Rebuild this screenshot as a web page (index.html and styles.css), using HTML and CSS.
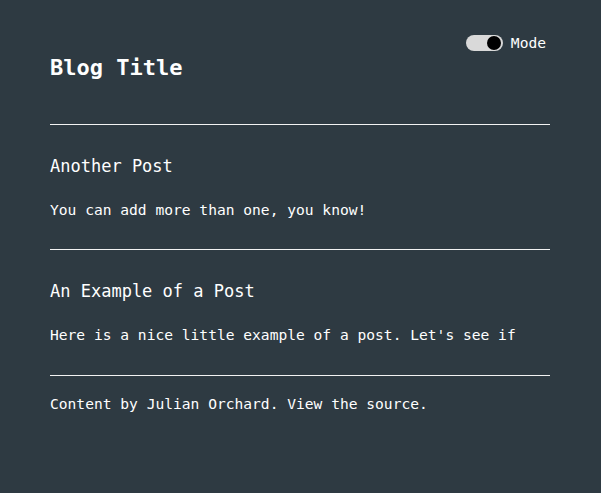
FILE: index.html
```html
<!DOCTYPE html>
<html lang="en">
<head>
<meta charset="utf-8">
<title>Blog Title</title>
<link rel="stylesheet" href="styles.css">
</head>
<body>
<div class="page">
  <header class="header">
    <div class="mode-row">
      <span class="toggle"><span class="knob"></span></span>
      <span class="mode-label">Mode</span>
    </div>
    <h1 class="title">Blog Title</h1>
  </header>
  <hr class="rule rule-first">
  <article class="post">
    <h2 class="post-title">Another Post</h2>
    <p class="post-body">You can add more than one, you know!</p>
  </article>
  <hr class="rule">
  <article class="post post-last">
    <h2 class="post-title">An Example of a Post</h2>
    <p class="post-body">Here is a nice little example of a post. Let's see if</p>
  </article>
  <hr class="rule">
  <footer class="footer">Content by Julian Orchard. View the source.</footer>
</div>
</body>
</html>
```

FILE: styles.css
```css
html, body {
  margin: 0;
  padding: 0;
  background: #2e3a42;
}
body {
  color: #ffffff;
  font-family: "DejaVu Sans Mono", "Liberation Mono", monospace;
  font-size: 14.6px;
  line-height: 20px;
}
.page {
  margin: 0 51px 0 50px;
  padding-top: 33px;
}
.header {
  display: flex;
  flex-direction: column;
}
.mode-row {
  display: flex;
  justify-content: flex-end;
  align-items: center;
  gap: 8px;
  height: 20px;
  padding-right: 4px;
}
.toggle {
  display: flex;
  align-items: center;
  justify-content: flex-end;
  width: 37px;
  height: 16px;
  border-radius: 8px;
  background: #d9d9d9;
  padding: 0 1.5px;
  box-sizing: border-box;
}
.knob {
  width: 14px;
  height: 14px;
  border-radius: 50%;
  background: #000000;
}
.mode-label {
  font-size: 14.6px;
}
.title {
  margin: 0;
  font-size: 22px;
  line-height: 30px;
  font-weight: bold;
}
.rule {
  border: 0;
  border-top: 1px solid #f2f2f2;
  height: 0;
  margin: 0;
}
.rule-first {
  margin-top: 41px;
}
.post {
  padding-top: 29px;
  padding-bottom: 29px;
}
.post-last {
  padding-bottom: 30px;
}
.post-title {
  margin: 0;
  font-size: 17px;
  line-height: 24px;
  font-weight: normal;
}
.post-body {
  margin: 22px 0 0 0;
}
.footer {
  padding-top: 18px;
}
```
